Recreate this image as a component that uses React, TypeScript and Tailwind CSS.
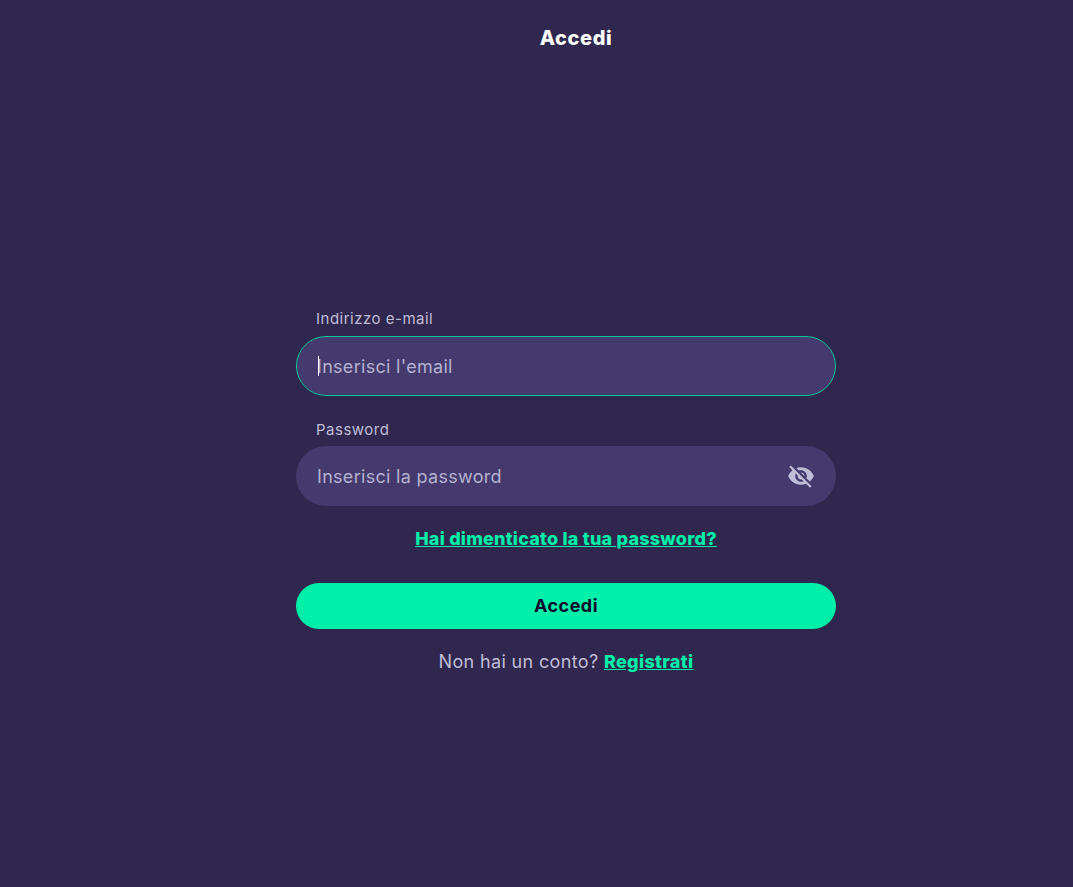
import { MdVisibilityOff } from 'react-icons/md'

const FONT = "font-['Inter',sans-serif]"

export default function App() {
  return (
    <div className={`min-h-screen bg-[#2f274d] ${FONT}`}>
      {/* Header */}
      <div className="h-[76px] pl-[79px] flex items-center justify-center">
        <h1 className="text-[20px] leading-6 font-extrabold tracking-[0.6px] text-white">Accedi</h1>
      </div>

      {/* Login form */}
      <form className="ml-[296px] mt-[233px] w-[540px] flex flex-col">
        <label className="pl-[20px] text-[15px] leading-5 tracking-[0.5px] text-[#c0bdd8]">Indirizzo e-mail</label>
        <div className="relative mt-[7px] h-[60px] rounded-[30px] border border-[#00c896] bg-[#443a6e]">
          <span className="absolute left-[21px] top-[19px] h-5 w-px bg-white" />
          <input
            placeholder="Inserisci l'email"
            className="w-full h-full bg-transparent pl-5 pr-5 text-[18px] tracking-[0.3px] outline-none text-white placeholder:text-[#b5b1d0]"
          />
        </div>

        <label className="mt-[24px] pl-[20px] text-[15px] leading-5 tracking-[0.5px] text-[#c0bdd8]">Password</label>
        <div className="mt-[6px] h-[60px] rounded-[30px] bg-[#443a6e] flex items-center pr-[21px]">
          <input
            placeholder="Inserisci la password"
            className="flex-1 h-full bg-transparent pl-[21px] text-[18px] tracking-[0.3px] outline-none text-white placeholder:text-[#b5b1d0]"
          />
          <MdVisibilityOff className="w-[28px] h-[28px] text-[#c0bdd8]" />
        </div>

        <a className="mt-[21px] text-center text-[18px] leading-6 font-extrabold tracking-[0.22px] text-[#00f0a9] underline">
          Hai dimenticato la tua password?
        </a>

        <button
          type="button"
          className="mt-[32px] h-[46px] pb-0.5 rounded-[23px] bg-[#00f0a9] text-[18px] font-bold tracking-[0.5px] text-[#10082a]"
        >
          Accedi
        </button>

        <p className="mt-[21px] text-center text-[18px] leading-6 tracking-[0.35px] text-[#c0bdd8]">
          Non hai un conto? <a className="font-extrabold text-[#00f0a9] underline">Registrati</a>
        </p>
      </form>
    </div>
  )
}
